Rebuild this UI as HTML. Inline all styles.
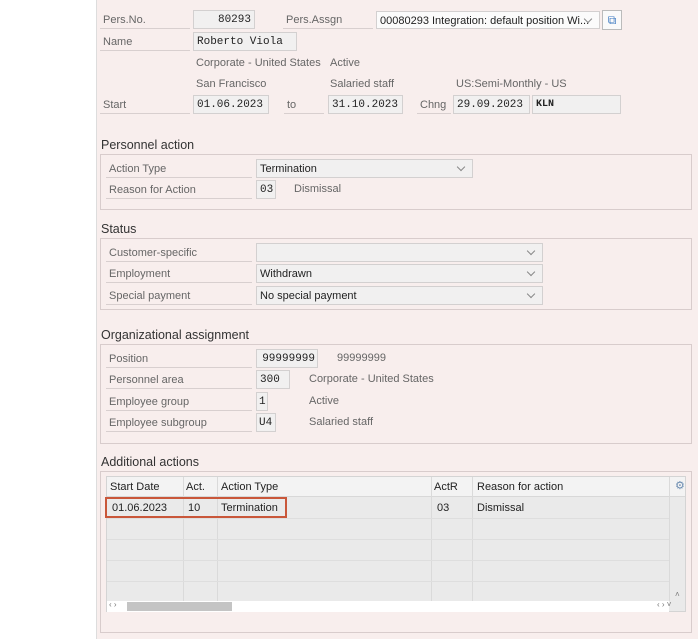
<!DOCTYPE html>
<html><head><meta charset="utf-8"><style>
*{box-sizing:border-box;margin:0;padding:0}
body{width:698px;height:639px;overflow:hidden;background:#fff;font-family:"Liberation Sans",sans-serif;font-size:11px;color:#333;position:relative}
#pg{position:absolute;left:96px;top:0;width:602px;height:639px;background:#f8eeed;border-left:1px solid #ddd}
.a{position:absolute;white-space:nowrap}
.l{color:#666;border-bottom:1px solid #d8cfcf;height:19px;line-height:20px;padding-left:3px}
.f{background:#f1f0f0;border:1px solid #d3d0d0;height:19px;line-height:18px;padding-left:3px;color:#222}
.m{font-family:"Liberation Mono",monospace;font-size:11px}
.t{color:#666}
.h{font-size:12.5px;color:#333}
.box{border:1px solid #d8cccc}
.dd::after{content:"";position:absolute;right:8px;top:4px;width:5px;height:5px;border-right:1px solid #888;border-bottom:1px solid #888;transform:rotate(45deg)}
.tb{position:absolute;left:106px;top:476px;width:580px;height:136px;background:#eaeaea;border:1px solid #d4d4d4}
.c{position:absolute;top:0;height:100%;border-left:1px solid #dadada}
.r{position:absolute;left:0;width:562px;border-top:1px solid #dedede}
</style></head><body>
<div id="pg"></div>
<div class="a l" style="left:100px;top:10px;width:90px">Pers.No.</div>
<div class="a f m" style="left:193px;top:10px;width:62px;text-align:right;padding-right:3px">80293</div>
<div class="a l" style="left:283px;top:10px;width:90px">Pers.Assgn</div>
<div class="a f dd" style="left:376px;top:11px;width:224px;height:18px;background:#fbfbfb">00080293 Integration: default position Wi...</div>
<div class="a" style="left:602px;top:10px;width:20px;height:20px;border:1px solid #bbb;background:#fafafa;color:#3a78c0;font-size:12px;text-align:center;line-height:18px">⧉</div>
<div class="a l" style="left:100px;top:32px;width:90px">Name</div>
<div class="a f m" style="left:193px;top:32px;width:104px">Roberto Viola</div>
<div class="a t" style="left:196px;top:57px">Corporate - United States</div>
<div class="a t" style="left:330px;top:57px">Active</div>
<div class="a t" style="left:196px;top:78px">San Francisco</div>
<div class="a t" style="left:330px;top:78px">Salaried staff</div>
<div class="a t" style="left:456px;top:78px">US:Semi-Monthly - US</div>
<div class="a l" style="left:100px;top:95px;width:90px">Start</div>
<div class="a f m" style="left:193px;top:95px;width:76px">01.06.2023</div>
<div class="a l" style="left:284px;top:95px;width:40px">to</div>
<div class="a f m" style="left:328px;top:95px;width:75px">31.10.2023</div>
<div class="a l" style="left:417px;top:95px;width:34px">Chng</div>
<div class="a f m" style="left:453px;top:95px;width:77px">29.09.2023</div>
<div class="a f m" style="left:532px;top:95px;width:89px;font-weight:bold;font-size:10px">KLN</div>

<div class="a h" style="left:101px;top:138px">Personnel action</div>
<div class="a box" style="left:100px;top:154px;width:592px;height:56px"></div>
<div class="a l" style="left:106px;top:159px;width:146px">Action Type</div>
<div class="a f dd" style="left:256px;top:159px;width:217px">Termination</div>
<div class="a l" style="left:106px;top:180px;width:146px">Reason for Action</div>
<div class="a f m" style="left:256px;top:180px;width:20px">03</div>
<div class="a t" style="left:294px;top:183px">Dismissal</div>

<div class="a h" style="left:101px;top:222px">Status</div>
<div class="a box" style="left:100px;top:238px;width:592px;height:72px"></div>
<div class="a l" style="left:106px;top:243px;width:146px">Customer-specific</div>
<div class="a f dd" style="left:256px;top:243px;width:287px"></div>
<div class="a l" style="left:106px;top:264px;width:146px">Employment</div>
<div class="a f dd" style="left:256px;top:264px;width:287px">Withdrawn</div>
<div class="a l" style="left:106px;top:286px;width:146px">Special payment</div>
<div class="a f dd" style="left:256px;top:286px;width:287px">No special payment</div>

<div class="a h" style="left:101px;top:328px">Organizational assignment</div>
<div class="a box" style="left:100px;top:344px;width:592px;height:100px"></div>
<div class="a l" style="left:106px;top:349px;width:146px">Position</div>
<div class="a f m" style="left:256px;top:349px;width:62px;text-align:right;padding-right:2px">99999999</div>
<div class="a t" style="left:337px;top:352px">99999999</div>
<div class="a l" style="left:106px;top:370px;width:146px">Personnel area</div>
<div class="a f m" style="left:256px;top:370px;width:34px">300</div>
<div class="a t" style="left:309px;top:373px">Corporate - United States</div>
<div class="a l" style="left:106px;top:392px;width:146px">Employee group</div>
<div class="a f m" style="left:256px;top:392px;width:12px;padding-left:2px">1</div>
<div class="a t" style="left:309px;top:395px">Active</div>
<div class="a l" style="left:106px;top:413px;width:146px">Employee subgroup</div>
<div class="a f m" style="left:256px;top:413px;width:20px;padding-left:2px">U4</div>
<div class="a t" style="left:309px;top:416px">Salaried staff</div>

<div class="a h" style="left:101px;top:455px">Additional actions</div>
<div class="a box" style="left:100px;top:471px;width:592px;height:162px"></div>
<div class="tb">
 <div style="position:absolute;left:0;top:0;width:578px;height:20px;background:#f3f3f3;border-bottom:1px solid #d8d8d8"></div>
 <div class="c" style="left:76px;height:124px"></div><div class="c" style="left:110px;height:124px"></div>
 <div class="c" style="left:324px;height:124px"></div><div class="c" style="left:365px;height:124px"></div>
 <div class="c" style="left:562px;height:124px"></div>
 <div class="r" style="top:41px"></div><div class="r" style="top:62px"></div><div class="r" style="top:83px"></div><div class="r" style="top:104px"></div>
 <div class="a" style="left:3px;top:4px;color:#222">Start Date</div>
 <div class="a" style="left:79px;top:4px;color:#222">Act.</div>
 <div class="a" style="left:114px;top:4px;color:#222">Action Type</div>
 <div class="a" style="left:327px;top:4px;color:#222">ActR</div>
 <div class="a" style="left:370px;top:4px;color:#222">Reason for action</div>
 <div class="a" style="left:568px;top:2px;color:#6a8bb0;font-size:11px">⚙</div>
 <div class="a" style="left:5px;top:25px;color:#222">01.06.2023</div>
 <div class="a" style="left:81px;top:25px;color:#222">10</div>
 <div class="a" style="left:114px;top:25px;color:#222">Termination</div>
 <div class="a" style="left:330px;top:25px;color:#222">03</div>
 <div class="a" style="left:370px;top:25px;color:#222">Dismissal</div>
 <div style="position:absolute;left:0;top:124px;width:562px;height:11px;background:#fff"></div>
 <div style="position:absolute;left:20px;top:125px;width:105px;height:9px;background:#c4c4c4"></div>
 <div class="a" style="left:2px;top:123px;font-size:8px;color:#777">‹ ›</div>
 <div class="a" style="left:550px;top:123px;font-size:8px;color:#777">‹ › ˅</div>
 <div class="a" style="left:568px;top:113px;font-size:8px;color:#777">˄</div>
</div>
<div class="a" style="left:105px;top:497px;width:182px;height:21px;border:2px solid #c9573a"></div>
</body></html>
